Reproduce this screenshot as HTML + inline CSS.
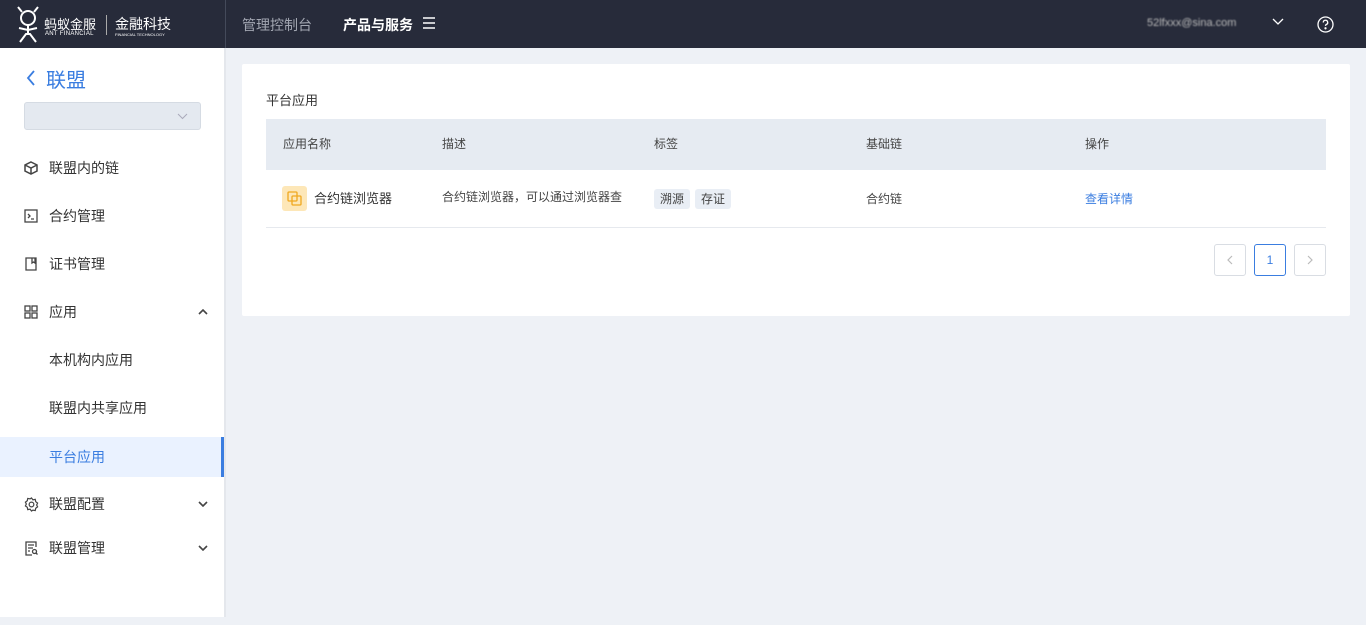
<!DOCTYPE html>
<html><head><meta charset="utf-8"><style>
*{box-sizing:border-box;margin:0;padding:0}
body{width:1366px;height:625px;background:#eef1f6;font-family:"Liberation Sans","Noto Sans CJK SC",sans-serif;position:relative;overflow:hidden;color:#333}
.top{position:absolute;left:0;top:0;width:1366px;height:48px;background:#272b3a;color:#fff}
.top .div{position:absolute;left:225px;top:0;width:1px;height:48px;background:#444a5a}
.side{position:absolute;left:0;top:48px;width:226px;height:569px;background:#fff;border-right:2px solid #e4e7ec}
.item{position:absolute;left:0;width:224px;height:48px;font-size:14px;color:#333;line-height:48px}
.item .t{position:absolute;left:49px}
.item svg{position:absolute;left:24px;top:17px}
.item svg.arr{position:absolute;left:198px;top:21px}
.card{position:absolute;left:242px;top:64px;width:1108px;height:252px;background:#fff;border-radius:2px}
.th{position:absolute;left:24px;top:55px;width:1060px;height:51px;background:#e6ebf2;font-size:12px;color:#444}
.th span,.row span{position:absolute;top:0;line-height:51px}
.row{position:absolute;left:24px;top:106px;width:1060px;height:58px;border-bottom:1px solid #e6e9ee;font-size:12px;color:#444}
.row span{line-height:58px}
.tag{display:inline-block;height:20px;line-height:20px;padding:0 6px;background:#e9eef5;border-radius:3px;margin-right:5px;color:#444}
.pg{position:absolute;top:180px;width:32px;height:32px;border:1px solid #d9dde3;border-radius:3px;text-align:center;line-height:30px;font-size:12px;color:#bbb}
</style></head><body>
<div class="top">
 <svg style="position:absolute;left:16px;top:6px" width="26" height="38" viewBox="0 0 26 38" fill="none" stroke="#fff" stroke-width="2"><circle cx="12" cy="12" r="7"/><path d="M6 6L2 1M18 6l4-5M12 19v8M4 36l6-8h4l6 8M3 22l9 2 9-2"/></svg>
 <span style="position:absolute;left:44px;top:14px;font-size:13px">蚂蚁金服</span>
 <span style="position:absolute;left:45px;top:31px;font-size:6px;letter-spacing:.3px">ANT FINANCIAL</span>
 <div style="position:absolute;left:106px;top:15px;width:1px;height:20px;background:#aaa"></div>
 <span style="position:absolute;left:115px;top:14px;font-size:14px">金融科技</span>
 <span style="position:absolute;left:115px;top:32px;font-size:4px">FINANCIAL TECHNOLOGY</span>
 <div class="div"></div>
 <span style="position:absolute;left:242px;top:15px;font-size:14px;color:#a3a7b2">管理控制台</span>
 <span style="position:absolute;left:343px;top:15px;font-size:14px;font-weight:bold">产品与服务</span>
 <svg style="position:absolute;left:423px;top:17px" width="12" height="12" viewBox="0 0 12 12" stroke="#fff" stroke-width="1.4"><path d="M0 1h12M0 6h12M0 11h12"/></svg>
 <span style="position:absolute;left:1147px;top:17px;font-size:11px;color:#bbb;filter:blur(.8px)">52lfxxx@sina.com</span>
 <svg style="position:absolute;left:1272px;top:18px" width="12" height="8" viewBox="0 0 12 8" fill="none" stroke="#fff" stroke-width="1.3"><path d="M1 1l5 5 5-5"/></svg>
 <svg style="position:absolute;left:1317px;top:16px" width="17" height="17" viewBox="0 0 17 17" fill="none" stroke="#fff" stroke-width="1.3"><circle cx="8.5" cy="8.5" r="7.5"/><path d="M6.3 6.5a2.2 2.2 0 1 1 3 2c-.6.3-.8.7-.8 1.4"/><circle cx="8.5" cy="12.3" r=".5" fill="#fff"/></svg>
</div>
<div class="side">
 <svg style="position:absolute;left:26px;top:22px" width="10" height="16" viewBox="0 0 10 16" fill="none" stroke="#3a7de0" stroke-width="1.8"><path d="M8 1L2 8l6 7"/></svg>
 <div style="position:absolute;left:46px;top:16px;font-size:20px;color:#3a7de0">联盟</div>
 <div style="position:absolute;left:24px;top:54px;width:177px;height:28px;background:#e4e9f0;border:1px solid #d5dbe3;border-radius:3px"><svg style="position:absolute;right:12px;top:10px" width="11" height="7" viewBox="0 0 11 7" fill="none" stroke="#aab" stroke-width="1"><path d="M1 1l4.5 4.5L10 1"/></svg></div>
 <div class="item" style="top:96px"><svg width="14" height="14" viewBox="0 0 14 14" fill="none" stroke="#444" stroke-width="1.5"><path d="M7 1l6 3v6l-6 3-6-3V4zM1 4l6 3 6-3M7 7v6"/></svg><span class="t">联盟内的链</span></div>
 <div class="item" style="top:144px"><svg width="14" height="14" viewBox="0 0 14 14" fill="none" stroke="#444" stroke-width="1.3"><rect x="1" y="1" width="12" height="12"/><path d="M4 5l2 2-2 2M7 10h3"/></svg><span class="t">合约管理</span></div>
 <div class="item" style="top:192px"><svg width="14" height="14" viewBox="0 0 14 14" fill="none" stroke="#444" stroke-width="1.3"><path d="M2 1h10v12H2zM8 1v5l1.5-1L11 6V1"/></svg><span class="t">证书管理</span></div>
 <div class="item" style="top:240px"><svg width="14" height="14" viewBox="0 0 14 14" fill="none" stroke="#444" stroke-width="1.3"><rect x="1" y="1" width="5" height="5"/><rect x="8" y="1" width="5" height="5"/><rect x="1" y="8" width="5" height="5"/><rect x="8" y="8" width="5" height="5"/></svg><span class="t">应用</span><svg class="arr" width="10" height="6" viewBox="0 0 10 6" fill="none" stroke="#444" stroke-width="1.6"><path d="M1 5l4-4 4 4"/></svg></div>
 <div class="item" style="top:288px"><span class="t">本机构内应用</span></div>
 <div class="item" style="top:336px"><span class="t">联盟内共享应用</span></div>
 <div class="item" style="top:389px;height:40px;line-height:40px;background:#eaf2ff;color:#3a7de0;border-right:3px solid #3a7de0"><span class="t">平台应用</span></div>
 <div class="item" style="top:432px"><svg width="15" height="15" viewBox="0 0 16 16" fill="none" stroke="#444" stroke-width="1.3"><circle cx="8" cy="8" r="2.5"/><path d="M8 1l1.5 2 2.5-.5.5 2.5 2 1.5-1 2 1 2-2 1.5-.5 2.5-2.5-.5L8 15l-1.5-2-2.5.5-.5-2.5-2-1.5 1-2-1-2 2-1.5.5-2.5 2.5.5z"/></svg><span class="t">联盟配置</span><svg class="arr" width="10" height="6" viewBox="0 0 10 6" fill="none" stroke="#444" stroke-width="1.6"><path d="M1 1l4 4 4-4"/></svg></div>
 <div class="item" style="top:476px"><svg width="14" height="15" viewBox="0 0 14 15" fill="none" stroke="#444" stroke-width="1.3"><path d="M12 6V1H2v13h6M4 4h6M4 7h5M4 10h2"/><circle cx="10.5" cy="10.5" r="2"/><path d="M12 12l1.5 1.5"/></svg><span class="t">联盟管理</span><svg class="arr" width="10" height="6" viewBox="0 0 10 6" fill="none" stroke="#444" stroke-width="1.6"><path d="M1 1l4 4 4-4"/></svg></div>
</div>
<div class="card">
 <div style="position:absolute;left:24px;top:26px;font-size:13px;color:#333">平台应用</div>
 <div class="th"><span style="left:17px">应用名称</span><span style="left:176px">描述</span><span style="left:388px">标签</span><span style="left:600px">基础链</span><span style="left:819px">操作</span></div>
 <div class="row">
  <div style="position:absolute;left:16px;top:16px;width:25px;height:25px;background:#fde7b8;border-radius:3px"><svg style="position:absolute;left:5px;top:5px" width="15" height="15" viewBox="0 0 15 15" fill="none" stroke="#f0a820" stroke-width="1.3"><rect x="1" y="1" width="9" height="9" rx="1"/><rect x="5" y="5" width="9" height="9" rx="1"/></svg></div>
  <span style="left:48px;font-size:13px;color:#333">合约链浏览器</span>
  <span style="left:176px;line-height:54px">合约链浏览器，可以通过浏览器查</span>
  <span style="left:388px"><i class="tag" style="font-style:normal">溯源</i><i class="tag" style="font-style:normal">存证</i></span>
  <span style="left:600px">合约链</span>
  <span style="left:819px;color:#3a7de0">查看详情</span>
 </div>
 <div class="pg" style="left:972px"><svg style="margin-top:10px" width="6" height="10" viewBox="0 0 6 10" fill="none" stroke="#bbb" stroke-width="1.2"><path d="M5 1L1 5l4 4"/></svg></div>
 <div class="pg" style="left:1012px;border-color:#3a7de0;color:#3a7de0">1</div>
 <div class="pg" style="left:1052px"><svg style="margin-top:10px" width="6" height="10" viewBox="0 0 6 10" fill="none" stroke="#bbb" stroke-width="1.2"><path d="M1 1l4 4-4 4"/></svg></div>
</div>
</body></html>
